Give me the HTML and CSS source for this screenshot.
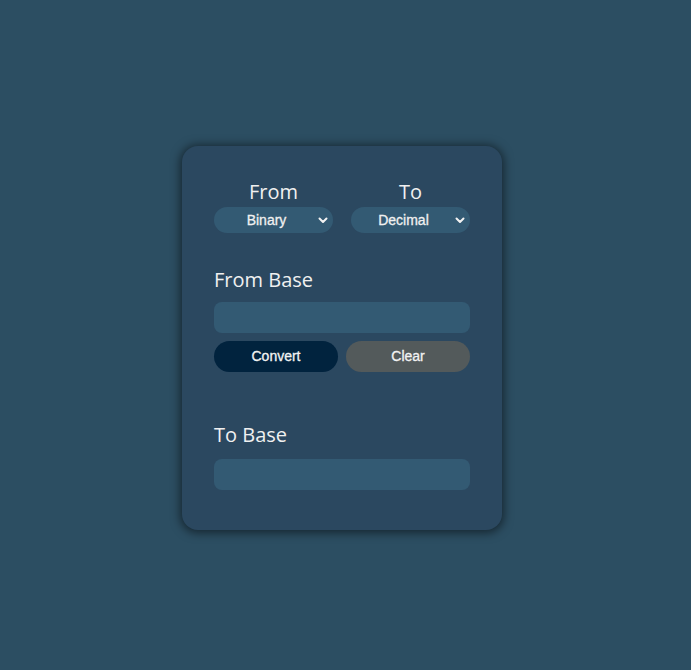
FILE: index.html
```html
<!DOCTYPE html>
<html>
<head>
<meta charset="utf-8">
<link rel="stylesheet" href="styles.css">
</head>
<body>
<div class="page">
  <div class="card">
    <div class="selectors">
      <div class="col">
        <div class="col-label">From</div>
        <div class="select"><span class="select-text">Binary</span><svg class="chev" width="10" height="7" viewBox="0 0 10 7"><path d="M1.5 1.5 L5 5 L8.5 1.5" fill="none" stroke="#f2f2f2" stroke-width="2" stroke-linecap="round" stroke-linejoin="round"/></svg></div>
      </div>
      <div class="col">
        <div class="col-label">To</div>
        <div class="select"><span class="select-text">Decimal</span><svg class="chev" width="10" height="7" viewBox="0 0 10 7"><path d="M1.5 1.5 L5 5 L8.5 1.5" fill="none" stroke="#f2f2f2" stroke-width="2" stroke-linecap="round" stroke-linejoin="round"/></svg></div>
      </div>
    </div>
    <div class="section first">
      <div class="label">From Base</div>
      <div class="field"></div>
      <div class="buttons">
        <button class="btn convert">Convert</button>
        <button class="btn clear">Clear</button>
      </div>
    </div>
    <div class="section second">
      <div class="label">To Base</div>
      <div class="field"></div>
    </div>
  </div>
</div>
</body>
</html>
```
FILE: styles.css
```css
html, body {
  margin: 0;
  padding: 0;
}
body {
  background: #2c4e62;
  font-family: "Open Sans", "Noto Sans", sans-serif;
  color: #f0f0f0;
}
.page {
  width: 691px;
  height: 670px;
  display: flex;
  justify-content: center;
  padding-top: 146px;
  padding-right: 7px;
  box-sizing: border-box;
}
.card {
  width: 320px;
  height: 384px;
  box-sizing: border-box;
  background: #2b4860;
  border-radius: 16px;
  box-shadow: 0 1px 10px 2px rgba(0, 0, 0, 0.5);
  padding: 31px 32px 0 32px;
  display: flex;
  flex-direction: column;
}
.selectors {
  display: flex;
  gap: 18px;
}
.col {
  width: 119px;
  display: flex;
  flex-direction: column;
  align-items: center;
}
.col-label {
  font-size: 20px;
  line-height: 29px;
  height: 30px;
}
.select {
  width: 119px;
  height: 26px;
  border-radius: 13px;
  background: #335a73;
  display: flex;
  align-items: center;
  position: relative;
  box-sizing: border-box;
}
.select-text {
  flex: 1;
  text-align: center;
  font-family: "Liberation Sans", Arial, sans-serif;
  font-size: 14px;
  font-weight: normal;
  -webkit-text-stroke: 0.3px #f0f0f0;
  padding-right: 14px;
  padding-bottom: 1px;
}
.chev {
  position: absolute;
  right: 5px;
  top: 10px;
}
.label {
  font-size: 20px;
  line-height: 30px;
  height: 30px;
}
.section.first {
  margin-top: 32px;
}
.section.first .label {
  margin-bottom: 7px;
}
.field {
  height: 31px;
  border-radius: 8px;
  background: #335a73;
}
.buttons {
  display: flex;
  gap: 8px;
  margin-top: 8px;
}
.btn {
  flex: 1;
  height: 31px;
  border: none;
  border-radius: 16px;
  font-family: "Liberation Sans", Arial, sans-serif;
  font-size: 14px;
  font-weight: normal;
  -webkit-text-stroke: 0.3px #f2f2f2;
  color: #f2f2f2;
  padding: 0 0 1px 0;
}
.convert {
  background: #01233e;
}
.clear {
  background: #535a5b;
}
.section.second {
  margin-top: 48px;
}
.section.second .label {
  margin-bottom: 9px;
}
```
